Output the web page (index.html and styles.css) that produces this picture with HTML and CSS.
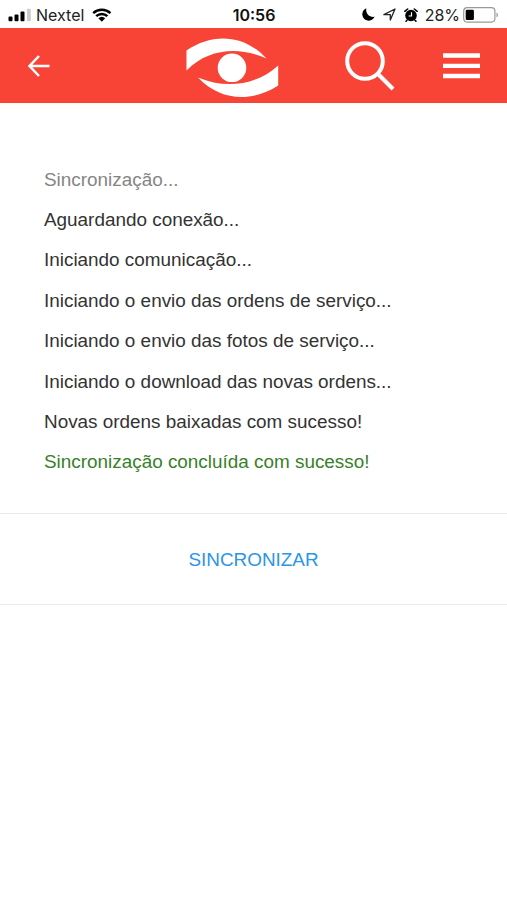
FILE: index.html
```html
<!DOCTYPE html>
<html lang="pt-BR">
<head>
    <meta charset="UTF-8">
    <meta name="viewport" content="width=device-width, initial-scale=1.0">
    <title>Sincronização</title>
    <link rel="stylesheet" href="styles.css">
</head>
<body>

<div class="status-bar">
    <div class="status-left">
        <svg class="signal" width="23" height="14" viewBox="0 0 23 14">
            <rect x="0.5" y="8.5" width="4" height="4.8" rx="1"/>
            <rect x="6.5" y="6.5" width="4" height="6.8" rx="1"/>
            <rect x="12.5" y="3.5" width="4" height="9.8" rx="1"/>
            <rect x="19" y="0.8" width="3.8" height="12.5" rx="1" fill="#ccc"/>
        </svg>
        <span class="carrier">Nextel</span>
        <svg class="wifi" width="20" height="14" viewBox="0 0 20 14">
            <path d="M1.2 5.2a12.6 12.6 0 0 1 17.2 0M4.2 8.2a8.2 8.2 0 0 1 11.2 0" fill="none" stroke="#000" stroke-width="2.5"/>
            <path d="M6.4 10.3a5 5 0 0 1 6.8 0L9.8 13.8z"/>
        </svg>
    </div>
    <div class="clock">10:56</div>
    <div class="status-right">
        <svg class="moon" width="13" height="13" viewBox="0 0 13 13">
            <path d="M4.4 0.3C3.2 4.7 6.8 9.7 12.6 8.8A6.4 6.4 0 1 1 4.4 0.3z"/>
        </svg>
        <svg class="location" width="13" height="13" viewBox="0 0 13 13">
            <path d="M0.9 6.7L12 1L7.3 12V6.7z" fill="none" stroke="#222" stroke-width="1.3" stroke-linejoin="round"/>
        </svg>
        <svg class="alarm" width="14" height="14" viewBox="0 0 14 14">
            <circle cx="7" cy="7.5" r="5.8"/>
            <path d="M0.8 3.3L3.7 1M13.2 3.3L10.3 1M3 12.2L2 13.3M11 12.2L12 13.3" stroke="#000" stroke-width="1.5" stroke-linecap="round"/>
            <path d="M7.5 4.3V8H4.6" fill="none" stroke="#fff" stroke-width="1.2"/>
        </svg>
        <span class="percent">28%</span>
        <svg class="battery" width="37" height="16" viewBox="0 0 37 16">
            <rect x="0.7" y="0.7" width="31.2" height="14.4" rx="3.5" fill="#fff" stroke="#999" stroke-width="1.2"/>
            <rect x="2.7" y="2.7" width="8.2" height="10.4" rx="1.3"/>
            <path d="M33.5 5.5a2.8 2.8 0 0 1 0 5z" fill="#999"/>
        </svg>
    </div>
</div>

<header class="navbar">
    <svg class="back" width="22" height="22" viewBox="0 0 22 22">
        <path d="M11 1L1.5 11L11 21M1.5 11H21.5" fill="none" stroke="#fff" stroke-width="2.5"/>
    </svg>
    <svg class="logo" width="94" height="60" viewBox="0 0 94 60">
        <path d="M0.5 12.5C25 -4.5 57 -5 80.5 20.5C54 8.5 23 9.5 0.5 32.5z"/>
        <path d="M12 39.5C38 50.5 69 48.5 92.2 27.5V47.5C67 64 35 64 12 39.5z"/>
        <circle cx="46" cy="29.8" r="14.3"/>
    </svg>
    <svg class="search" width="50" height="50" viewBox="0 0 50 50">
        <circle cx="20" cy="20" r="17.8"/>
        <path d="M32.5 32.5L48 48"/>
    </svg>
    <svg class="menu" width="37" height="26" viewBox="0 0 37 26">
        <path d="M0 2.5H37M0 12.8H37M0 23H37" stroke="#fff" stroke-width="4.3"/>
    </svg>
</header>

<main>
    <ul class="log">
        <li class="title">Sincronização...</li>
        <li>Aguardando conexão...</li>
        <li>Iniciando comunicação...</li>
        <li>Iniciando o envio das ordens de serviço...</li>
        <li>Iniciando o envio das fotos de serviço...</li>
        <li>Iniciando o download das novas ordens...</li>
        <li>Novas ordens baixadas com sucesso!</li>
        <li class="success">Sincronização concluída com sucesso!</li>
    </ul>
    <button class="sync-button">SINCRONIZAR</button>
</main>

</body>
</html>
```
FILE: styles.css
```css
* {
    box-sizing: border-box;
}
body {
    margin: 0;
    min-height: 100vh;
    background-color: #fff;
    color: #333;
    font-family: "Liberation Sans", Arial, sans-serif;
}
svg {
    display: block;
    flex: none;
}
.status-bar {
    display: grid;
    grid-template-columns: 1fr auto 1fr;
    align-items: center;
    height: 28px;
    padding: 1px 7px 0 8px;
    font-family: Inter, sans-serif;
    font-size: 16px;
    color: #222;
}
.status-left,
.status-right {
    display: flex;
    align-items: center;
}
.status-right {
    justify-content: flex-end;
}
.carrier {
    margin: 0 8px 0 5px;
}
.clock {
    font-weight: 600;
    color: #111;
}
.location {
    margin: 0 8px;
}
.percent {
    margin: 0 3px 0 7px;
}
.navbar {
    display: flex;
    align-items: center;
    height: 75px;
    padding: 0 27px 0 28px;
    background-color: #f74437;
}
.logo {
    margin: 4px 0 0 136px;
    fill: #fff;
}
.search {
    margin-left: 64.5px;
    fill: none;
    stroke: #fff;
    stroke-width: 4;
}
.menu {
    margin-left: auto;
}
.log {
    margin: 0;
    padding: 56.6px 44px 30.2px;
    list-style: none;
    font-size: 18.9px;
    line-height: 40.4px;
}
.log .title {
    color: #858585;
}
.log .success {
    color: #38802a;
}
.sync-button {
    display: block;
    width: 100%;
    height: 92px;
    padding: 1px 0 0;
    border: solid #ebebeb;
    border-width: 1px 0;
    background: none;
    color: #2b95e9;
    font-family: inherit;
    font-size: 18.9px;
}
```
